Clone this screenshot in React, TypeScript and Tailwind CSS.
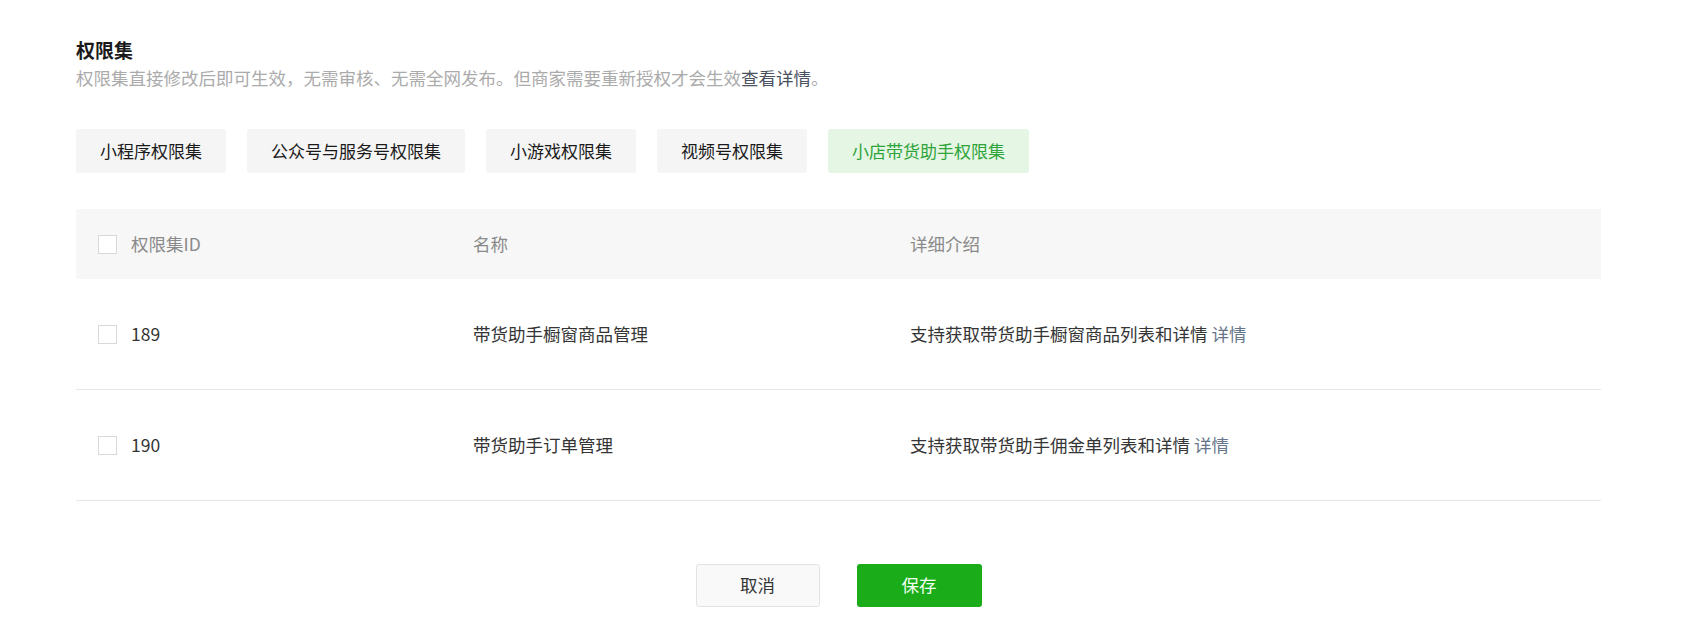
import React, { useState } from 'react';

const tabs = ['小程序权限集', '公众号与服务号权限集', '小游戏权限集', '视频号权限集', '小店带货助手权限集'];

const rows = [
  { id: '189', name: '带货助手橱窗商品管理', desc: '支持获取带货助手橱窗商品列表和详情' },
  { id: '190', name: '带货助手订单管理', desc: '支持获取带货助手佣金单列表和详情' },
];

const Checkbox = () => (
  <span className="inline-block w-[19px] h-[19px] border border-[#d9d9d9] bg-white shrink-0" />
);

export default function App() {
  const [active, setActive] = useState(4);

  return (
    <div className="min-h-screen bg-white font-['Noto_Sans_CJK_SC','Noto_Sans',sans-serif] text-[#353535]">
      <div className="pl-[76px] pr-[83px] pt-[37px]">
        <h2 className="text-[19px] leading-[26px] font-bold text-[#1a1a1a]">权限集</h2>
        <p className="mt-[3px] text-[17.5px] leading-[24px] text-[#ababab]">
          权限集直接修改后即可生效，无需审核、无需全网发布。但商家需要重新授权才会生效
          <span className="text-[#4a5160]">查看详情</span>。
        </p>

        <div className="mt-[39px] flex gap-[21px]">
          {tabs.map((t, i) => (
            <button
              key={t}
              onClick={() => setActive(i)}
              className={
                i === active
                  ? 'h-[44px] px-[24px] rounded-[3px] bg-[#e6f6e4] text-[#2fa43b] text-[17px]'
                  : 'h-[44px] px-[24px] rounded-[3px] bg-[#f5f5f5] text-[#1a1a1a] text-[17px]'
              }
            >
              {t}
            </button>
          ))}
        </div>

        <div className="mt-[36px] text-[17.5px]">
          <div className="flex items-center h-[70px] bg-[#f7f7f7] text-[#8a8a8a]">
            <div className="w-[397px] pl-[22px] flex items-center gap-[14px]">
              <Checkbox />
              <span>权限集ID</span>
            </div>
            <div className="w-[437px]">名称</div>
            <div className="flex-1">详细介绍</div>
          </div>
          {rows.map(r => (
            <div key={r.id} className="flex items-center h-[111px] border-b border-[#e6e6e6]">
              <div className="w-[397px] pl-[22px] flex items-center gap-[14px]">
                <Checkbox />
                <span>{r.id}</span>
              </div>
              <div className="w-[437px]">{r.name}</div>
              <div className="flex-1">
                {r.desc} <span className="text-[#66758a]">详情</span>
              </div>
            </div>
          ))}
        </div>

        <div className="mt-[63px] flex justify-center gap-[37px]">
          <button className="w-[124px] h-[43px] rounded-[3px] border border-[#e3e3e3] bg-[#f9f9f9] text-[17.5px] text-[#353535]">
            取消
          </button>
          <button className="w-[125px] h-[43px] rounded-[3px] bg-[#1aad19] text-[17.5px] text-[#f0fff0]">
            保存
          </button>
        </div>
      </div>
    </div>
  );
}
